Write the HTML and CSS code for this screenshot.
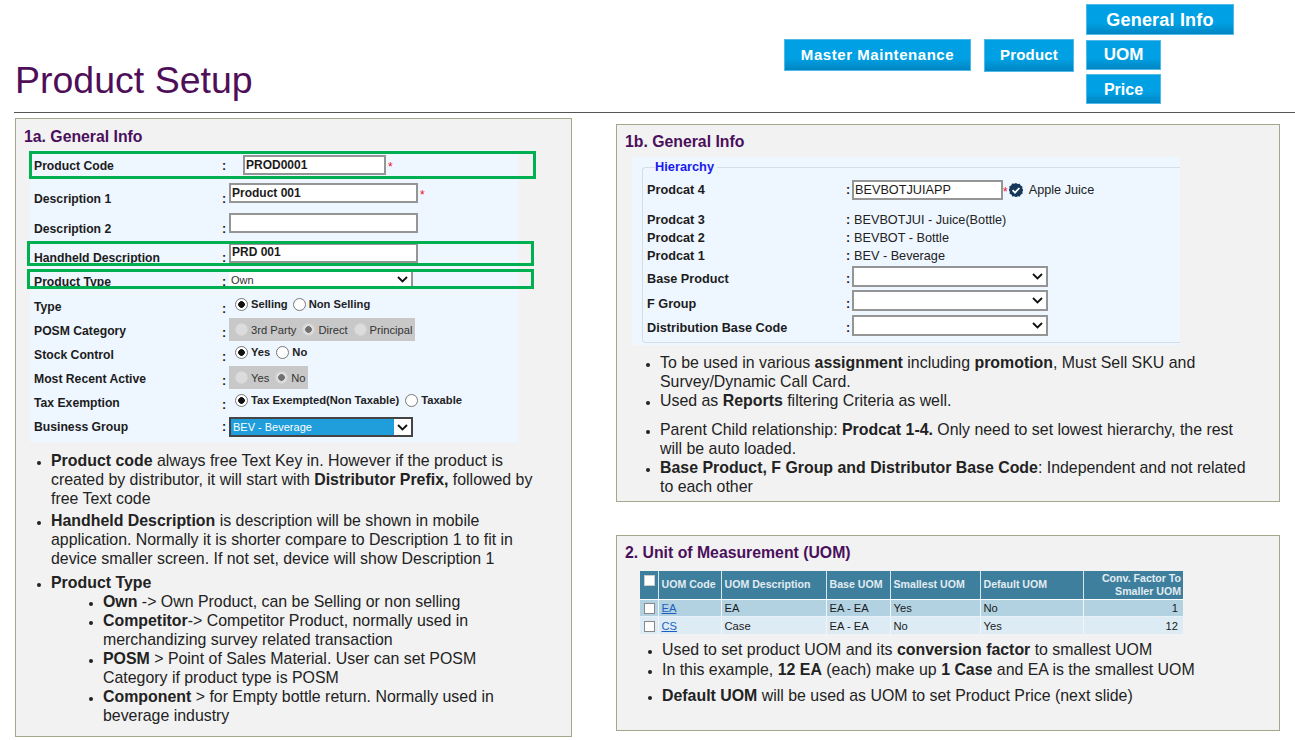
FILE: index.html
```html
<!DOCTYPE html>
<html lang="en">
<head>
  <meta charset="utf-8" />
  <title>Product Setup</title>
  <link rel="stylesheet" href="styles.css">
</head>
<body>
  <header class="top">
    <h1>Product Setup</h1>
    <nav class="crumbs">
      <a class="btn btn-master">Master Maintenance</a>
      <a class="btn btn-product">Product</a>
      <div class="stack">
        <a class="btn btn-general">General Info</a>
        <a class="btn btn-uom">UOM</a>
        <a class="btn btn-price">Price</a>
      </div>
    </nav>
  </header>

  <main class="slide">
    <section class="panel panel-left">
      <h2>1a. General Info</h2>
      <div class="form">
        <div class="row r-code">
          <span class="label">Product Code</span><span class="colon">:</span>
          <div class="ctl"><input class="txt w-code" value="PROD0001"><span class="req">*</span></div>
          <span class="mark"></span>
        </div>
        <div class="row r-d1">
          <span class="label low">Description 1</span><span class="colon low">:</span>
          <div class="ctl up"><input class="txt w-desc" value="Product 001"><span class="req">*</span></div>
        </div>
        <div class="row r-d2">
          <span class="label low">Description 2</span><span class="colon low">:</span>
          <div class="ctl up"><input class="txt w-desc" value=""></div>
        </div>
        <div class="row r-hand">
          <span class="label low">Handheld Description</span><span class="colon low">:</span>
          <div class="ctl up"><input class="txt w-desc" value="PRD 001"></div>
          <span class="mark"></span>
        </div>
        <div class="row r-ptype">
          <span class="label mid">Product Type</span><span class="colon low">:</span>
          <div class="ctl"><select class="sel w-ptype"><option>Own</option></select></div>
          <span class="mark"></span>
        </div>
        <div class="row r-opt">
          <span class="label mid">Type</span><span class="colon low">:</span>
          <div class="ctl radios first">
            <label><input type="radio" name="t" checked>Selling</label>
            <label><input type="radio" name="t">Non Selling</label>
          </div>
        </div>
        <div class="row r-opt">
          <span class="label mid">POSM Category</span><span class="colon low">:</span>
          <div class="ctl radios off">
            <label><input type="radio" name="p" disabled>3rd Party</label>
            <label><input type="radio" name="p" disabled checked>Direct</label>
            <label><input type="radio" name="p" disabled>Principal</label>
          </div>
        </div>
        <div class="row r-opt">
          <span class="label mid">Stock Control</span><span class="colon low">:</span>
          <div class="ctl radios">
            <label><input type="radio" name="s" checked>Yes</label>
            <label><input type="radio" name="s">No</label>
          </div>
        </div>
        <div class="row r-opt">
          <span class="label mid">Most Recent Active</span><span class="colon low">:</span>
          <div class="ctl radios off">
            <label><input type="radio" name="m" disabled>Yes</label>
            <label><input type="radio" name="m" disabled checked>No</label>
          </div>
        </div>
        <div class="row r-opt">
          <span class="label mid">Tax Exemption</span><span class="colon low">:</span>
          <div class="ctl radios">
            <label><input type="radio" name="x" checked>Tax Exempted(Non Taxable)</label>
            <label><input type="radio" name="x">Taxable</label>
          </div>
        </div>
        <div class="row r-biz">
          <span class="label">Business Group</span><span class="colon">:</span>
          <div class="ctl"><select class="sel sel-active w-biz"><option>BEV - Beverage</option></select></div>
        </div>
      </div>

      <ul class="notes notes-left">
        <li><b>Product code</b> always free Text Key in. However if the product is created by distributor, it will start with <b>Distributor Prefix,</b> followed by free Text code</li>
        <li class="gap3"><b>Handheld Description</b> is description will be shown in mobile application. Normally it is shorter compare to Description 1 to fit in device smaller screen. If not set, device will show Description 1</li>
        <li class="gap5"><b>Product Type</b>
          <ul class="sub">
            <li><b>Own</b> -&gt; Own Product, can be Selling or non selling</li>
            <li><b>Competitor</b>-&gt; Competitor Product, normally used in merchandizing survey related transaction</li>
            <li><b>POSM</b> &gt; Point of Sales Material. User can set POSM Category if product type is POSM</li>
            <li><b>Component</b> &gt; for Empty bottle return. Normally used in beverage industry</li>
          </ul>
        </li>
      </ul>
    </section>

    <div class="col-right">
      <section class="panel panel-hier">
        <h2>1b. General Info</h2>
        <div class="hier-wrap">
          <fieldset class="hier">
            <legend>Hierarchy</legend>
            <div class="hrow h-input">
              <span class="label">Prodcat 4</span><span class="colon">:</span>
              <div class="ctl"><input class="txt w-cat" value="BEVBOTJUIAPP"><span class="req req-tight">*</span>
                <svg class="ok" width="14" height="14" viewBox="0 0 14 14"><path d="M7 0l1.700 1 2-.2.9 1.800 1.800.9-.2 2L14.400 7l-1 1.700.2 2-1.800.9-.9 1.800-2-.2L7 14.200l-1.700-1-2 .2-.9-1.800-1.800-.9.2-2L-.4 7l1-1.700-.2-2 1.800-.9.9-1.800 2 .2z" fill="#14375a"/><path d="M3.600 7.200l2.400 2.400 4.400-4.600" fill="none" stroke="#fff" stroke-width="1.800"/></svg>
                <span class="plain">Apple Juice</span></div>
            </div>
            <div class="hrow h-text h-first"><span class="label">Prodcat 3</span><span class="colon">:</span><span class="plain">BEVBOTJUI - Juice(Bottle)</span></div>
            <div class="hrow h-text"><span class="label">Prodcat 2</span><span class="colon">:</span><span class="plain">BEVBOT - Bottle</span></div>
            <div class="hrow h-text h-last"><span class="label">Prodcat 1</span><span class="colon">:</span><span class="plain">BEV - Beverage</span></div>
            <div class="hrow h-sel"><span class="label low-s">Base Product</span><span class="colon low-s">:</span><div class="ctl"><select class="sel w-hsel"></select></div></div>
            <div class="hrow h-sel"><span class="label low-s">F Group</span><span class="colon low-s">:</span><div class="ctl"><select class="sel w-hsel"></select></div></div>
            <div class="hrow h-sel"><span class="label low-s">Distribution Base Code</span><span class="colon low-s">:</span><div class="ctl"><select class="sel w-hsel"></select></div></div>
          </fieldset>
        </div>
        <ul class="notes notes-hier">
          <li>To be used in various <b>assignment</b> including <b>promotion</b>, Must Sell SKU and Survey/Dynamic Call Card.</li>
          <li>Used as <b>Reports</b> filtering Criteria as well.</li>
          <li class="gap10">Parent Child relationship: <b>Prodcat 1-4.</b> Only need to set lowest hierarchy, the rest will be auto loaded.</li>
          <li><b>Base Product, F Group and Distributor Base Code</b>: Independent and not related to each other</li>
        </ul>
      </section>

      <section class="panel panel-uom">
        <h2>2. Unit of Measurement (UOM)</h2>
        <table class="grid">
          <colgroup>
            <col class="c-check"><col class="c-code"><col class="c-desc"><col class="c-base"><col class="c-small"><col class="c-def"><col class="c-conv">
          </colgroup>
          <thead>
            <tr>
              <th class="top-check"><input type="checkbox" class="tick"></th>
              <th>UOM Code</th>
              <th>UOM Description</th>
              <th>Base UOM</th>
              <th>Smallest UOM</th>
              <th>Default UOM</th>
              <th class="num">Conv. Factor To Smaller UOM</th>
            </tr>
          </thead>
          <tbody>
            <tr class="odd">
              <td><input type="checkbox" class="tick"></td>
              <td><a class="link">EA</a></td>
              <td>EA</td>
              <td>EA - EA</td>
              <td>Yes</td>
              <td>No</td>
              <td class="num">1</td>
            </tr>
            <tr>
              <td><input type="checkbox" class="tick"></td>
              <td><a class="link">CS</a></td>
              <td>Case</td>
              <td>EA - EA</td>
              <td>No</td>
              <td>Yes</td>
              <td class="num">12</td>
            </tr>
          </tbody>
        </table>
        <ul class="notes notes-uom">
          <li>Used to set product UOM and its <b>conversion factor</b> to smallest UOM</li>
          <li class="gap1">In this example, <b>12 EA</b> (each) make up <b>1 Case</b> and EA is the smallest UOM</li>
          <li class="gap7"><b>Default UOM</b> will be used as UOM to set Product Price (next slide)</li>
        </ul>
      </section>
    </div>
  </main>
</body>
</html>
```

FILE: styles.css
```css
* { box-sizing: border-box; }
body { margin: 0; background: #fff; color: #1a1a1a; font-family: "Liberation Sans", Arial, sans-serif; overflow: hidden; }

/* header */
.top { display: flex; justify-content: space-between; height: 113px; margin-left: 14px; border-bottom: 1px solid #555; }
h1 { margin: 58px 0 0 1px; font-size: 37.500px; line-height: 44px; font-weight: normal; color: #4f0f58; }
.crumbs { display: flex; align-items: flex-start; margin-right: 61px; padding-top: 4px; }
.btn { display: flex; align-items: center; justify-content: center; color: #fff; font-weight: bold; background: linear-gradient(#00a1e4 60%, #0085c3); border: 1px solid #4fb9e8; }
.btn-master { width: 187px; height: 32px; margin: 35px 13px 0 0; padding-bottom: 2px; font-size: 15px; letter-spacing: .55px; }
.btn-product { width: 90px; height: 33px; margin: 35px 12px 0 0; padding-bottom: 2px; font-size: 15px; letter-spacing: .2px; }
.stack { display: flex; flex-direction: column; align-items: flex-start; }
.btn-general { width: 148px; height: 31px; padding-top: 2px; font-size: 18px; letter-spacing: .2px; }
.btn-uom { width: 75px; height: 30px; margin-top: 5px; font-size: 17px; }
.btn-price { width: 75px; height: 30px; margin-top: 4px; padding-top: 2px; font-size: 16px; }

/* layout */
.slide { display: flex; gap: 44px; padding: 5px 0 0 15px; }
.panel { background: #f2f2f2; border: 1px solid #a6a68c; }
.panel h2 { margin: 0; font-size: 15.800px; line-height: 20px; color: #4a0f5c; }
.panel-left { width: 557px; height: 619px; padding: 8px 0 0 8px; }
.col-right { display: flex; flex-direction: column; gap: 33px; padding-top: 6px; }
.panel-hier { width: 664px; height: 378px; padding: 7px 0 0 8px; }
.panel-uom { width: 664px; height: 196px; padding: 7px 0 0 8px; }

/* form */
.form { width: 488px; margin: 3px 0 0 6px; background: #eef6ff; }
.row { position: relative; display: grid; grid-template-columns: 192px 7px 1fr; align-items: center; }
.label { padding-left: 4px; font-size: 12.200px; line-height: 14px; font-weight: bold; color: #1c1c1c; white-space: nowrap; }
.colon { font-size: 12.500px; line-height: 14px; font-weight: bold; }
.low { margin-top: 9px; }
.mid { margin-top: 5px; }
.r-code { height: 30px; }
.r-code .label, .r-code .colon { margin-top: 2px; }
.r-d1 { height: 28px; }
.r-d2 { height: 32px; }
.r-hand { height: 27px; }
.r-ptype { height: 25px; }
.r-opt { height: 24px; }
.r-biz { height: 30px; }
.r-code .ctl { padding-left: 14px; }
.r-ptype .colon { margin-top: 5px; }
.ctl { display: flex; align-items: center; min-width: 0; }
.up { margin-top: -2px; }
.mark { position: absolute; border: 3px solid #00b050; pointer-events: none; }
.r-code .mark { left: -1px; top: 1px; width: 507px; height: 28px; }
.r-hand .mark { left: -3px; top: 1px; width: 507px; height: 25px; }
.r-ptype .mark { left: -3px; top: 2px; width: 507px; height: 20px; }

.txt { height: 20px; padding: 0 1px 1px 1px; border: 2px solid #959595; border-radius: 0; background: #fff; font: bold 12px "Liberation Sans", Arial, sans-serif; color: #1c1c1c; outline: none; }
.w-code { width: 143px; }
.w-desc { width: 189px; }
.w-cat { width: 151px; font-weight: normal; font-size: 12.700px; padding-left: 1px; }
.req { margin: 3px 0 0 2px; font-size: 12px; line-height: 10px; color: #f01020; }
.req-tight { margin-left: 0; }

.sel { height: 20px; padding: 0 0 0 2px; border: 2px solid #959595; border-radius: 0; appearance: none; font: 11px "Liberation Sans", Arial, sans-serif; color: #333; outline: none; background: #fff url("data:image/svg+xml,%3Csvg xmlns='http://www.w3.org/2000/svg' width='11' height='7'%3E%3Cpath d='M1 1l4.500 4.500L10 1' fill='none' stroke='%23111' stroke-width='1.800'/%3E%3C/svg%3E") no-repeat right 3px center; }
.w-ptype { width: 184px; height: 18px; border-width: 0 2px 0 0; }
.w-biz { width: 184px; height: 20px; border-color: #444; }
.w-hsel { width: 196px; height: 21px; }
.sel-active { color: #fff; background-image: url("data:image/svg+xml,%3Csvg xmlns='http://www.w3.org/2000/svg' width='11' height='7'%3E%3Cpath d='M1 1l4.500 4.500L10 1' fill='none' stroke='%23111' stroke-width='1.800'/%3E%3C/svg%3E"), linear-gradient(#1f9edb, #1f9edb); background-repeat: no-repeat, no-repeat; background-position: right 3px center, 0 0; background-size: auto, 163px 16px; }

/* radios */
.radios { font-size: 11.200px; font-weight: bold; color: #222; gap: 6px; padding-left: 6px; }
.radios label { display: flex; align-items: center; gap: 3px; white-space: nowrap; }
.radios input { appearance: none; width: 13px; height: 13px; margin: 0; border: 1px solid #777; border-radius: 50%; background: #fff; }
.radios input:checked { background: radial-gradient(circle, #111 0 3px, #fff 3.600px); }
.radios.first { gap: 5px; }
.off { align-self: start; margin-top: 2px; height: 23px; width: fit-content; background: #c8c8c8; font-weight: normal; color: #333; padding: 0 2px 0 6px; }
.off input { border-color: #d4d4d4; background: #dcdcdc; }
.off input:checked { background: radial-gradient(circle, #707070 0 3px, #dcdcdc 3.600px); }

/* bullets */
.notes { margin: 0; padding: 0; font-size: 15.900px; line-height: 19px; color: #222; }
.notes li::marker { font-size: 12px; }
.notes-left { width: 485px; margin: 9px 0 0 27px; }
.sub { margin: 0; padding-left: 52px; list-style: disc; }
.gap1 { margin-top: 1px; }
.gap3 { margin-top: 3px; }
.gap5 { margin-top: 5px; }
.gap7 { margin-top: 7px; }
.gap10 { margin-top: 10px; }

/* hierarchy */
.hier-wrap { width: 548px; height: 188px; margin: 5px 0 0 7px; padding: 5px 0 0 10px; background: #eef6ff; }
.hier { width: 538px; height: 181px; margin: 0; padding: 0 0 0 4px; border: 1px solid #d5dde5; border-right: 0; border-radius: 4px 0 0 4px; }
.hier legend { margin-left: 8px; padding: 0 3px 0 0; font-size: 12.800px; line-height: 10px; font-weight: bold; color: #1a1aee; }
.hrow { display: grid; grid-template-columns: 199px 6px 1fr; align-items: center; }
.hrow .label { padding-left: 0; font-size: 12.700px; }
.hrow > .plain { padding-left: 2px; }
.plain { font-size: 12.700px; line-height: 14px; color: #222; white-space: nowrap; }
.h-input { height: 20px; margin-top: 8px; }
.h-text { height: 18px; }
.h-first { margin-top: 11px; }
.h-last { margin-bottom: -1px; }
.h-sel { height: 24.500px; }
.low-s { margin-top: 6px; }
.ok { margin-left: 1px; }
.ctl .plain { margin-left: 6px; }
.notes-hier { width: 590px; margin: 8px 0 0 35px; }

/* uom table */
.grid { width: 543px; margin: 8px 0 0 15px; border-collapse: collapse; table-layout: fixed; font-size: 11.200px; color: #1a1a1a; }
.c-check { width: 18px; }
.c-code { width: 63px; }
.c-desc { width: 105px; }
.c-base { width: 64px; }
.c-small { width: 90px; }
.c-def { width: 103px; }
.c-conv { width: 100px; }
.grid th { height: 28px; padding: 0 2px 0 3px; background: #3f7f9e; border-left: 1px solid #d8e6ee; border-bottom: 1px solid #fff; color: #e2ecf1; font-size: 10.600px; line-height: 13px; text-align: left; white-space: nowrap; }
.grid th:first-child, .grid td:first-child { border-left: 0; padding: 0; }
.grid td { height: 17.500px; padding: 0 3px; background: #ddebf4; border-left: 1px solid #f0f6fa; line-height: 14px; }
.grid .odd td { background: #b2d2e2; border-bottom: 1px solid #e6f0f6; }
.grid .num { text-align: right; padding-right: 5px; }
.grid th.num { padding-right: 2px; white-space: normal; padding-left: 12px; }
.tick { appearance: none; display: block; width: 11px; height: 11px; margin: 2px 0 0 4px; border: 1px solid #888; background: #fff; }
.top-check .tick { margin: -8px 0 0 4px; border-color: #ccc; }
.link { color: #1a5fc0; text-decoration: underline; }
.notes-uom { width: 620px; margin: 6px 0 0 37px; }
```
